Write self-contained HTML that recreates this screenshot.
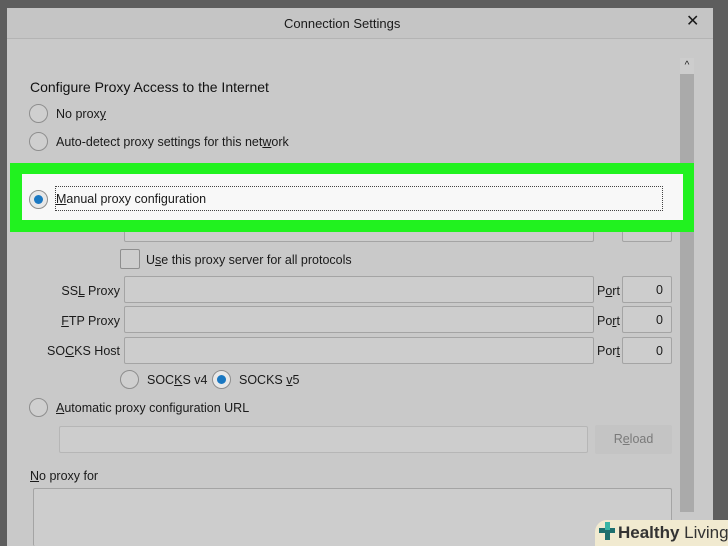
<!DOCTYPE html>
<html><head><meta charset="utf-8"><style>
*{margin:0;padding:0;box-sizing:border-box}
html,body{width:728px;height:546px;overflow:hidden}
body{background:#5e5e5e;font-family:"Liberation Sans",sans-serif;color:#1a1a1a;position:relative}
.a{position:absolute}
.t{position:absolute;font-size:12.5px;line-height:16px;white-space:nowrap}
.r{position:absolute;width:19px;height:19px;border-radius:50%;border:1px solid #8e8e8e;background:#cfcfcf}
.r.on::after{content:"";position:absolute;left:4px;top:4px;width:9px;height:9px;border-radius:50%;background:#1a78c2}
.r.on{background:#e8e8e8}
.in{position:absolute;border:1px solid #a4a4a4;border-radius:2px;background:#cdcdcd}
.lbl{position:absolute;font-size:12.5px;line-height:16px;text-align:right;width:110px;left:10px}
.p{position:absolute;font-size:12.5px;left:622px;width:49px;text-align:right;padding-right:8px;line-height:26px}
u{text-decoration:underline}
</style></head><body>
<div class="a" style="left:7px;top:8px;width:706px;height:538px;background:#c9c9c9"></div>
<div class="a" style="left:7px;top:8px;width:706px;height:31px;background:#c5c5c5;border-bottom:1px solid #b4b4b4"></div>
<div class="t" style="left:284px;top:16px;font-size:13px">Connection Settings</div>
<div class="t" style="left:686px;top:14px;font-size:16px">✕</div>
<div class="a" style="left:680px;top:58px;width:14px;height:16px;background:#cdcdcd;font-size:10px;text-align:center;line-height:16px">^</div>
<div class="a" style="left:680px;top:74px;width:14px;height:438px;background:#aaaaaa"></div>

<div class="t" style="left:30px;top:79px;font-size:14px;color:#111">Configure Proxy Access to the Internet</div>
<div class="r" style="left:29px;top:104px"></div><div class="t" style="left:56px;top:106px">No prox<u>y</u></div>
<div class="r" style="left:29px;top:132px"></div><div class="t" style="left:56px;top:134px">Auto-detect proxy settings for this net<u>w</u>ork</div>

<div class="in" style="left:124px;top:215px;width:470px;height:27px"></div>
<div class="in" style="left:622px;top:215px;width:50px;height:27px"></div>

<div class="a" style="left:10px;top:163px;width:684px;height:69px;background:#21f21f"></div>
<div class="a" style="left:22px;top:174px;width:661px;height:46px;background:#f8f8f8"></div>
<div class="a" style="left:55px;top:186px;width:608px;height:25px;border:1px dotted #444"></div>
<div class="r on" style="left:29px;top:190px"></div>
<div class="t" style="left:56px;top:191px"><u>M</u>anual proxy configuration</div>

<div class="a" style="left:120px;top:249px;width:20px;height:20px;border:1px solid #8e8e8e;border-radius:2px;background:#cdcdcd"></div>
<div class="t" style="left:146px;top:252px">U<u>s</u>e this proxy server for all protocols</div>

<div class="lbl" style="top:283px">SS<u>L</u> Proxy</div>
<div class="in" style="left:124px;top:276px;width:470px;height:27px"></div>
<div class="t" style="left:597px;top:283px">P<u>o</u>rt</div><div class="in" style="left:622px;top:276px;width:50px;height:27px"></div><div class="p" style="top:277px">0</div>

<div class="lbl" style="top:313px"><u>F</u>TP Proxy</div>
<div class="in" style="left:124px;top:306px;width:470px;height:27px"></div>
<div class="t" style="left:597px;top:313px">Po<u>r</u>t</div><div class="in" style="left:622px;top:306px;width:50px;height:27px"></div><div class="p" style="top:307px">0</div>

<div class="lbl" style="top:343px">SO<u>C</u>KS Host</div>
<div class="in" style="left:124px;top:337px;width:470px;height:27px"></div>
<div class="t" style="left:597px;top:343px">Por<u>t</u></div><div class="in" style="left:622px;top:337px;width:50px;height:27px"></div><div class="p" style="top:338px">0</div>

<div class="r" style="left:120px;top:370px"></div><div class="t" style="left:147px;top:372px">SOC<u>K</u>S v4</div>
<div class="r on" style="left:212px;top:370px"></div><div class="t" style="left:239px;top:372px">SOCKS <u>v</u>5</div>

<div class="r" style="left:29px;top:398px"></div><div class="t" style="left:56px;top:400px"><u>A</u>utomatic proxy configuration URL</div>
<div class="in" style="left:59px;top:426px;width:529px;height:27px;border-color:#b6b6b6"></div>
<div class="a" style="left:595px;top:425px;width:77px;height:29px;background:#c4c4c4;border-radius:2px;font-size:12.5px;color:#7a7a7a;text-align:center;line-height:29px">R<u>e</u>load</div>

<div class="t" style="left:30px;top:468px"><u>N</u>o proxy for</div>
<div class="in" style="left:33px;top:488px;width:639px;height:58px;border-bottom:none"></div>

<div class="a" style="left:595px;top:520px;width:133px;height:26px;background:#f1ead0;border-radius:12px 0 0 0"></div>
<div class="a" style="left:599px;top:528px;width:16px;height:5px;background:#1d6e6e"></div>
<div class="a" style="left:605px;top:522px;width:5px;height:18px;background:#1d6e6e"></div>
<div class="a" style="left:605px;top:522px;width:5px;height:8px;background:#39b5a5"></div>
<div class="t" style="left:618px;top:523px;font-size:17px;line-height:20px;color:#333"><b>Healthy</b> Living</div>
</body></html>
